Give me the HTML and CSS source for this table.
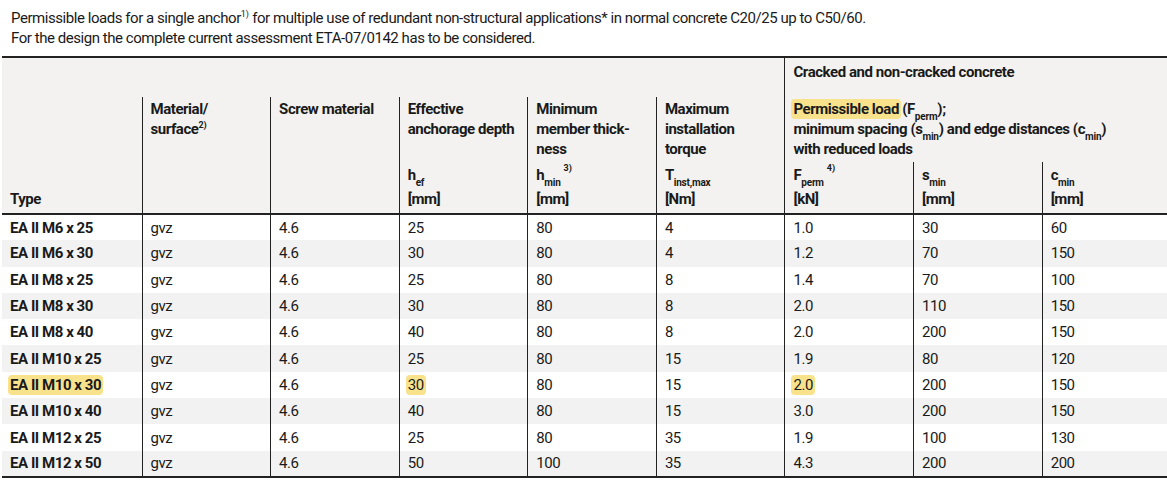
FILE: index.html
```html
<!DOCTYPE html>
<html lang="en">
<head>
<meta charset="utf-8">
<title>Permissible loads</title>
<link rel="stylesheet" href="styles.css">
</head>
<body>
<div class="intro">
  <p>Permissible loads for a single anchor<span class="fn">1)</span> for multiple use of redundant non-structural applications* in normal concrete C20/25 up to C50/60.</p>
  <p>For the design the complete current assessment ETA-07/0142 has to be considered.</p>
</div>
<table class="loads">
  <colgroup>
    <col class="c-type"><col class="c-std"><col class="c-std"><col class="c-std"><col class="c-std"><col class="c-std"><col class="c-std"><col class="c-std"><col class="c-last">
  </colgroup>
  <thead>
    <tr class="hr1">
      <th colspan="6" class="blank"></th>
      <th colspan="3" class="grp">Cracked and non-cracked concrete</th>
    </tr>
    <tr class="hr2">
      <th rowspan="2" class="type first">Type</th>
      <th rowspan="2" class="top">Material/<br>surface<span class="fn">2)</span></th>
      <th rowspan="2" class="top">Screw material</th>
      <th class="top">Effective<br>anchorage depth</th>
      <th class="top">Minimum<br>member thick-<br>ness</th>
      <th class="top">Maximum<br>installation<br>torque</th>
      <th colspan="3" class="top"><span class="hl">Permissible load</span> (F<span class="sub">perm</span>);<br>minimum spacing (s<span class="sub">min</span>) and edge distances (c<span class="sub">min</span>)<br>with reduced loads</th>
    </tr>
    <tr class="hr3">
      <th class="unit"><div class="sym">h<span class="sub">ef</span></div><div>[mm]</div></th>
      <th class="unit"><div class="sym">h<span class="sub">min</span><span class="fn sfn">3)</span></div><div>[mm]</div></th>
      <th class="unit"><div class="sym">T<span class="sub">inst,max</span></div><div>[Nm]</div></th>
      <th class="unit"><div class="sym">F<span class="sub">perm</span><span class="fn sfn">4)</span></div><div>[kN]</div></th>
      <th class="unit"><div class="sym">s<span class="sub">min</span></div><div>[mm]</div></th>
      <th class="unit"><div class="sym">c<span class="sub">min</span></div><div>[mm]</div></th>
    </tr>
  </thead>
  <tbody>
    <tr><th>EA II M6 x 25</th><td>gvz</td><td>4.6</td><td>25</td><td>80</td><td>4</td><td>1.0</td><td>30</td><td>60</td></tr>
    <tr><th>EA II M6 x 30</th><td>gvz</td><td>4.6</td><td>30</td><td>80</td><td>4</td><td>1.2</td><td>70</td><td>150</td></tr>
    <tr><th>EA II M8 x 25</th><td>gvz</td><td>4.6</td><td>25</td><td>80</td><td>8</td><td>1.4</td><td>70</td><td>100</td></tr>
    <tr><th>EA II M8 x 30</th><td>gvz</td><td>4.6</td><td>30</td><td>80</td><td>8</td><td>2.0</td><td>110</td><td>150</td></tr>
    <tr><th>EA II M8 x 40</th><td>gvz</td><td>4.6</td><td>40</td><td>80</td><td>8</td><td>2.0</td><td>200</td><td>150</td></tr>
    <tr><th>EA II M10 x 25</th><td>gvz</td><td>4.6</td><td>25</td><td>80</td><td>15</td><td>1.9</td><td>80</td><td>120</td></tr>
    <tr><th><span class="hl">EA II M10 x 30</span></th><td>gvz</td><td>4.6</td><td><span class="hl">30</span></td><td>80</td><td>15</td><td><span class="hl">2.0</span></td><td>200</td><td>150</td></tr>
    <tr><th>EA II M10 x 40</th><td>gvz</td><td>4.6</td><td>40</td><td>80</td><td>15</td><td>3.0</td><td>200</td><td>150</td></tr>
    <tr><th>EA II M12 x 25</th><td>gvz</td><td>4.6</td><td>25</td><td>80</td><td>35</td><td>1.9</td><td>100</td><td>130</td></tr>
    <tr><th>EA II M12 x 50</th><td>gvz</td><td>4.6</td><td>50</td><td>100</td><td>35</td><td>4.3</td><td>200</td><td>200</td></tr>
  </tbody>
</table>
</body>
</html>
```

FILE: styles.css
```css
html, body {
  margin: 0;
  background: #ffffff;
}

body {
  padding: 8px 0 0 2px;
  font-family: Roboto, "Liberation Sans", sans-serif;
  font-size: 15px;
  letter-spacing: -0.45px;
  color: #1a1a1a;
}

.intro {
  padding-left: 9px;
  margin-bottom: 8px;
  line-height: 20px;
  white-space: nowrap;
}

.intro p {
  margin: 0;
}

.fn {
  font-size: 9px;
  letter-spacing: 0;
  vertical-align: 6px;
  line-height: 0;
}

.sub {
  font-size: 10px;
  letter-spacing: -0.2px;
  vertical-align: -6px;
  line-height: 0;
}

.sfn {
  margin-left: 3px;
  vertical-align: 9px;
}

.hl {
  background: #f9e28c;
  border-radius: 4px;
  padding: 1px 2px;
  margin: 0 -2px;
}

.loads {
  border-collapse: collapse;
  table-layout: fixed;
  width: 1165px;
  border-top: 2px solid #222;
  border-bottom: 2px solid #222;
}

.c-type { width: 140px; }
.c-std { width: 128.6px; }
.c-last { width: 125px; }

.loads thead {
  background: #f3f2f0;
}

.loads thead th {
  font-weight: bold;
  text-align: left;
  padding: 0 8px;
  line-height: 20px;
  white-space: nowrap;
  border-left: 1px solid #222;
}

.loads thead th.first,
.loads thead th.blank {
  border-left: none;
}

.hr1 { height: 40px; }
.hr2 { height: 65px; }
.hr3 { height: 52px; }

.loads thead .grp {
  vertical-align: top;
  padding-top: 4px;
}

.loads thead .top {
  vertical-align: top;
  padding-top: 2px;
}

.loads thead .type {
  vertical-align: bottom;
  padding-bottom: 4px;
}

.loads thead .unit {
  vertical-align: bottom;
  padding-bottom: 4px;
}

.loads thead .hr3 th {
  border-bottom: 2px solid #222;
}

.loads thead .hr2 th[rowspan] {
  border-bottom: 2px solid #222;
}

.sym {
  line-height: 24px;
  margin-bottom: 2px;
}

.loads tbody tr {
  height: 26.3px;
}

.loads tbody tr:nth-child(even) {
  background: #f2f2f2;
}

.loads tbody th,
.loads tbody td {
  text-align: left;
  padding: 0 8px;
  line-height: 18px;
  vertical-align: middle;
  white-space: nowrap;
  border-left: 1px solid #222;
}

.loads tbody th {
  font-weight: bold;
  border-left: none;
}
```
